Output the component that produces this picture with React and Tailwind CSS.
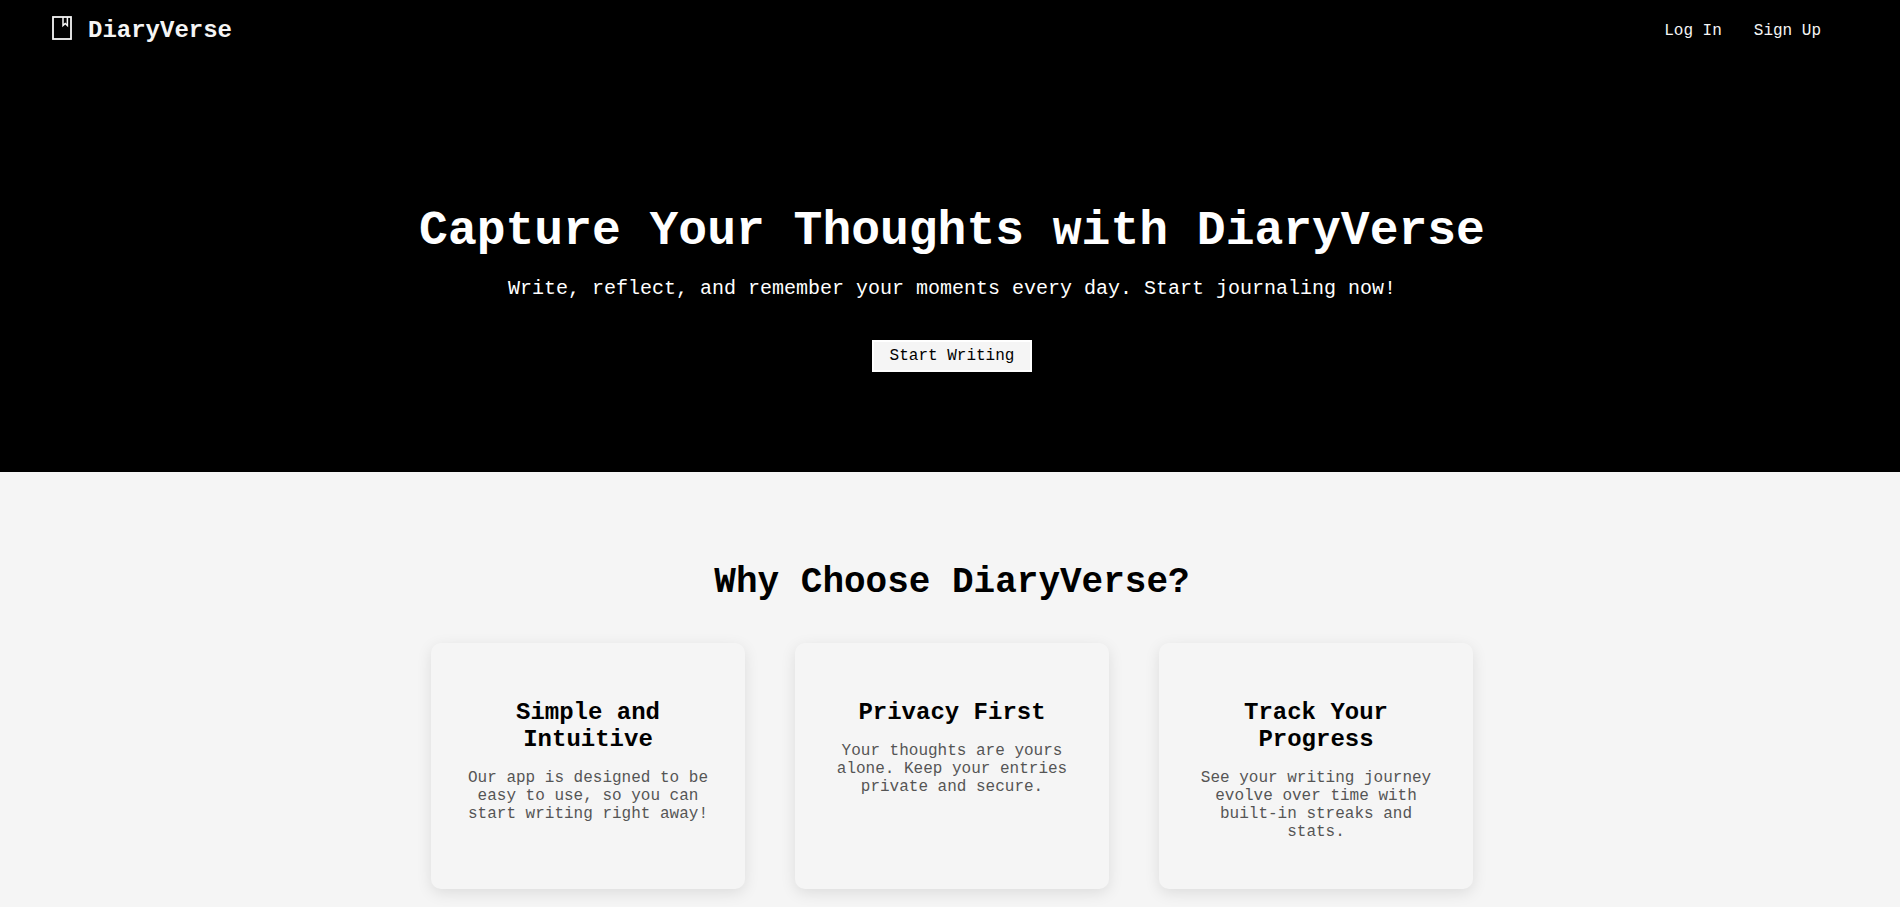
const features = [
  {
    title: "Simple and Intuitive",
    text: "Our app is designed to be easy to use, so you can start writing right away!",
  },
  {
    title: "Privacy First",
    text: "Your thoughts are yours alone. Keep your entries private and secure.",
  },
  {
    title: "Track Your Progress",
    text: "See your writing journey evolve over time with built-in streaks and stats.",
  },
];

function JournalIcon() {
  return (
    <svg viewBox="0 0 20 24" className="h-6 w-5" fill="none" stroke="currentColor" aria-hidden="true">
      <rect x="1" y="1" width="18" height="22" strokeWidth="1.8" />
      <path d="M11 1v8.5l2.2-2 2.2 2V1" strokeWidth="1.5" />
    </svg>
  );
}

export default function App() {
  return (
    <div className="min-h-screen bg-[#f5f5f5] font-['Courier_New','Liberation_Mono',monospace] text-base leading-[18px] text-black">
      <header className="flex h-[60px] items-start justify-between bg-black pt-4 pr-[79px] pl-13 leading-[30px] text-[#f5f5f5]">
        <a href="#home" className="flex gap-4">
          <JournalIcon />
          <span className="text-2xl leading-[30px] font-bold">DiaryVerse</span>
        </a>
        <nav className="flex gap-8">
          <a href="#login">Log In</a>
          <a href="#signup">Sign Up</a>
        </nav>
      </header>

      <main>
        <section className="flex flex-col items-center bg-black pt-36 pr-5 pb-[100px] pl-6 text-center text-white">
          <h1 className="text-5xl leading-[54px] font-bold">Capture Your Thoughts with DiaryVerse</h1>
          <p className="mt-5 text-xl leading-[22px]">
            Write, reflect, and remember your moments every day. Start journaling now!
          </p>
          <button type="button" className="mt-10 h-8 border-2 border-white bg-[#f5f5f5] px-4 text-black">
            Start Writing
          </button>
        </section>

        <section className="flex flex-col items-center pt-[90px] pr-5 pb-4 pl-6 text-center">
          <h2 className="text-4xl leading-[41px] font-bold">Why Choose DiaryVerse?</h2>
          <div className="mt-10 flex flex-wrap justify-center gap-[50px]">
            {features.map((feature) => (
              <article
                key={feature.title}
                className="w-[314px] rounded-[10px] px-8 pt-14 pb-12 shadow-[0_4px_15px_rgba(0,0,0,0.1)]"
              >
                <h3 className="text-2xl leading-[27px] font-bold">{feature.title}</h3>
                <p className="mt-4 text-[#555555]">{feature.text}</p>
              </article>
            ))}
          </div>
        </section>
      </main>
    </div>
  );
}
